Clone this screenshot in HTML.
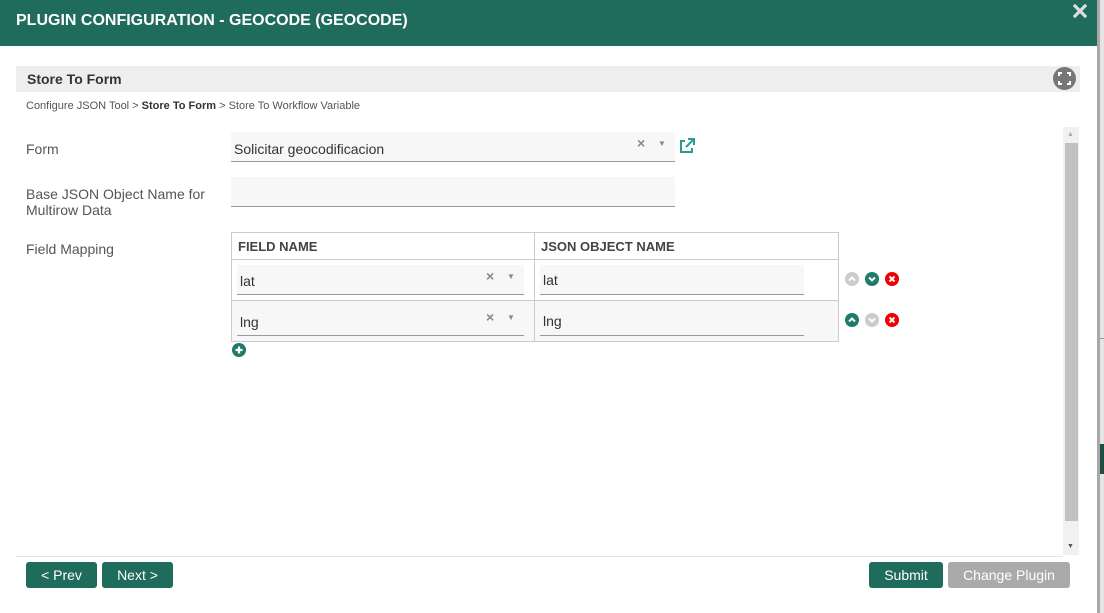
<!DOCTYPE html>
<html><head><meta charset="utf-8"><style>
*{box-sizing:border-box;margin:0;padding:0}
body{width:1104px;height:613px;overflow:hidden;background:#fff;font-family:"Liberation Sans",Arial,sans-serif;position:relative;color:#333}
.a{position:absolute}
.hdr{left:0;top:0;width:1097px;height:46px;background:#1f6b5c;color:#fff;font-weight:bold;font-size:16px;line-height:42px;padding-left:16px}
.rb{left:1097px;top:0;width:3px;height:613px;background:#a8a8a8}
.rbg{left:1100px;top:0;width:4px;height:613px;background:#e4e4e4}
.lbl{font-size:14px;color:#555}
.inp{background:#f7f7f7;border-bottom:1px solid #999}
.btn{background:#1f6b5c;color:#fff;font-size:14px;text-align:center;line-height:26px;border-radius:3px;height:26px;top:562px}
.x{color:#888;font-size:14px;font-weight:bold}
.dd{color:#888;font-size:8px}
td,th{border:1px solid #ccc}
</style></head><body>
<div class="a hdr">PLUGIN CONFIGURATION - GEOCODE (GEOCODE)</div>
<svg class="a" style="left:1073px;top:4px" width="14" height="14" viewBox="0 0 14 14"><path d="M2 2L12 12M12 2L2 12" stroke="#ddd" stroke-width="3.2" stroke-linecap="square"/></svg>
<div class="a rb"></div><div class="a rbg"></div>
<div class="a" style="left:1100px;top:444px;width:4px;height:30px;background:#1f4f44"></div>
<div class="a" style="left:1100px;top:338px;width:4px;height:1px;background:#999"></div>
<div class="a" style="left:16px;top:66px;width:1064px;height:26px;background:#eee;font-weight:bold;font-size:14px;line-height:26px;padding-left:11px;color:#333">Store To Form</div>
<svg class="a" style="left:1053px;top:67px" width="23" height="23" viewBox="0 0 23 23"><circle cx="11.5" cy="11.5" r="11.5" fill="#777"/><path d="M6 9V6h3M14 6h3v3M17 14v3h-3M9 17H6v-3" fill="none" stroke="#fff" stroke-width="2"/></svg>
<div class="a" style="left:26px;top:100px;font-size:11px;color:#555">Configure JSON Tool &gt; <b style="color:#333">Store To Form</b> &gt; Store To Workflow Variable</div>
<div class="a" style="left:1063px;top:127px;width:16px;height:428px;background:#f1f1f1"></div>
<div class="a" style="left:1065px;top:143px;width:13px;height:378px;background:#c1c1c1"></div>
<div class="a" style="left:1067px;top:131px;font-size:7px;color:#aaa">▲</div>
<div class="a" style="left:1067px;top:543px;font-size:7px;color:#555">▼</div>
<div class="a" style="left:16px;top:556px;width:1047px;height:1px;background:#e5e5e5"></div>

<div class="a lbl" style="left:26px;top:141px">Form</div>
<div class="a lbl" style="left:26px;top:186px;line-height:16px">Base JSON Object Name for<br>Multirow Data</div>
<div class="a lbl" style="left:26px;top:241px">Field Mapping</div>

<div class="a inp" style="left:231px;top:132px;width:444px;height:30px"></div>
<div class="a" style="left:234px;top:141px;font-size:14px;color:#333">Solicitar geocodificacion</div>
<div class="a x" style="left:637px;top:135px">×</div><div class="a dd" style="left:658px;top:139px">▼</div>
<svg class="a" style="left:679px;top:138px" width="16" height="16" viewBox="0 0 16 16"><path d="M6 3H2v11h11v-4" fill="none" stroke="#2a9d8f" stroke-width="2"/><path d="M9 1h6v6M15 1L7 9" fill="none" stroke="#2a9d8f" stroke-width="2"/></svg>
<div class="a inp" style="left:231px;top:177px;width:444px;height:30px"></div>

<table class="a" style="left:231px;top:232px;width:608px;height:110px;border-collapse:collapse">
<tr style="height:27px"><th style="width:303px;text-align:left;font-size:13px;padding-left:6px;color:#444">FIELD NAME</th><th style="text-align:left;font-size:13px;padding-left:6px;color:#444">JSON OBJECT NAME</th></tr>
<tr style="height:41px"><td></td><td></td></tr>
<tr style="height:41px;background:#f7f7f7"><td></td><td></td></tr>
</table>
<div class="a inp" style="left:237px;top:265px;width:287px;height:30px"></div>
<div class="a inp" style="left:540px;top:265px;width:264px;height:30px"></div>
<div class="a inp" style="left:237px;top:306px;width:287px;height:30px"></div>
<div class="a inp" style="left:540px;top:306px;width:264px;height:30px"></div>
<div class="a" style="left:240px;top:273px;font-size:14px">lat</div>
<div class="a" style="left:543px;top:272px;font-size:14px">lat</div>
<div class="a" style="left:240px;top:314px;font-size:14px">lng</div>
<div class="a" style="left:543px;top:313px;font-size:14px">lng</div>
<div class="a x" style="left:486px;top:268px">×</div><div class="a dd" style="left:507px;top:272px">▼</div>
<div class="a x" style="left:486px;top:309px">×</div><div class="a dd" style="left:507px;top:313px">▼</div>

<svg class="a" style="left:845px;top:272px" width="14" height="14" viewBox="0 0 14 14"><circle cx="7" cy="7" r="7" fill="#ccc"/><path d="M4 8.5L7 5.5L10 8.5" fill="none" stroke="#fff" stroke-width="2"/></svg>
<svg class="a" style="left:865px;top:272px" width="14" height="14" viewBox="0 0 14 14"><circle cx="7" cy="7" r="7" fill="#1f7a6a"/><path d="M4 5.5L7 8.5L10 5.5" fill="none" stroke="#fff" stroke-width="2"/></svg>
<svg class="a" style="left:885px;top:272px" width="14" height="14" viewBox="0 0 14 14"><circle cx="7" cy="7" r="7" fill="#e00"/><path d="M4.5 4.5L9.5 9.5M9.5 4.5L4.5 9.5" stroke="#fff" stroke-width="2"/></svg>
<svg class="a" style="left:845px;top:313px" width="14" height="14" viewBox="0 0 14 14"><circle cx="7" cy="7" r="7" fill="#1f7a6a"/><path d="M4 8.5L7 5.5L10 8.5" fill="none" stroke="#fff" stroke-width="2"/></svg>
<svg class="a" style="left:865px;top:313px" width="14" height="14" viewBox="0 0 14 14"><circle cx="7" cy="7" r="7" fill="#ccc"/><path d="M4 5.5L7 8.5L10 5.5" fill="none" stroke="#fff" stroke-width="2"/></svg>
<svg class="a" style="left:885px;top:313px" width="14" height="14" viewBox="0 0 14 14"><circle cx="7" cy="7" r="7" fill="#e00"/><path d="M4.5 4.5L9.5 9.5M9.5 4.5L4.5 9.5" stroke="#fff" stroke-width="2"/></svg>
<svg class="a" style="left:232px;top:343px" width="14" height="14" viewBox="0 0 14 14"><circle cx="7" cy="7" r="7" fill="#1f7a6a"/><path d="M7 3.5V10.5M3.5 7H10.5" stroke="#fff" stroke-width="2.2"/></svg>

<div class="a btn" style="left:26px;width:71px">&lt; Prev</div>
<div class="a btn" style="left:102px;width:71px">Next &gt;</div>
<div class="a btn" style="left:869px;width:74px">Submit</div>
<div class="a btn" style="left:948px;width:122px;background:#aaa">Change Plugin</div>
</body></html>
